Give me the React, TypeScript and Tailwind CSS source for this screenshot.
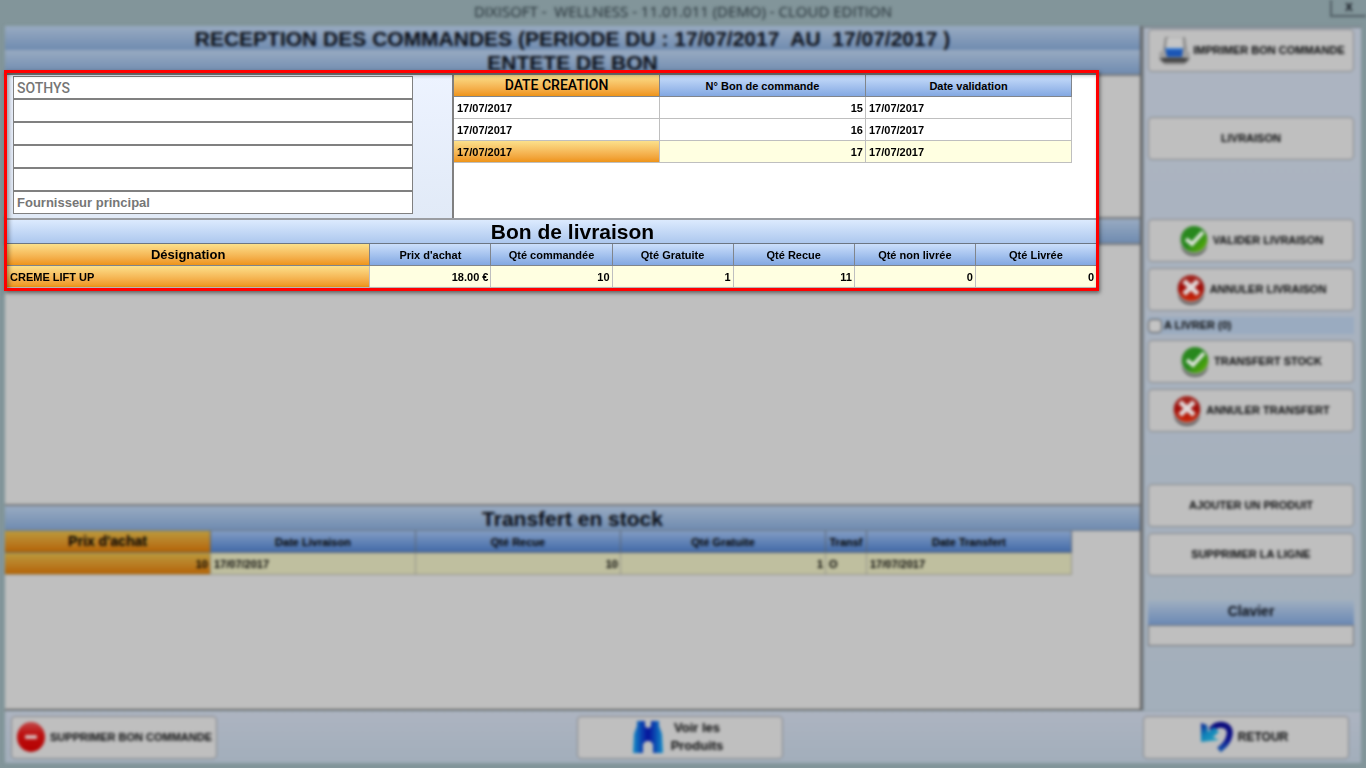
import type { ReactNode } from "react";

type Align = "left" | "right";

interface Column {
  label: string;
  width: string;
  align: Align;
}

const orderColumns: Column[] = [
  { label: "DATE CREATION", width: "w-[206px]", align: "left" },
  { label: "N° Bon de commande", width: "w-[206px]", align: "right" },
  { label: "Date validation", width: "w-[206px]", align: "left" },
];

const orders = [
  ["17/07/2017", "15", "17/07/2017"],
  ["17/07/2017", "16", "17/07/2017"],
  ["17/07/2017", "17", "17/07/2017"],
];

const deliveryColumns: Column[] = [
  { label: "Désignation", width: "w-1/3", align: "left" },
  { label: "Prix d'achat", width: "w-1/9", align: "right" },
  { label: "Qté commandée", width: "w-1/9", align: "right" },
  { label: "Qté Gratuite", width: "w-1/9", align: "right" },
  { label: "Qté Recue", width: "w-1/9", align: "right" },
  { label: "Qté non livrée", width: "w-1/9", align: "right" },
  { label: "Qté Livrée", width: "w-1/9", align: "right" },
];

const deliveries = [["CREME LIFT UP", "18.00 €", "10", "1", "11", "0", "0"]];

const transferColumns: Column[] = [
  { label: "Prix d'achat", width: "w-[206px]", align: "right" },
  { label: "Date Livraison", width: "w-[205px]", align: "left" },
  { label: "Qté Recue", width: "w-[205px]", align: "right" },
  { label: "Qté Gratuite", width: "w-[205px]", align: "right" },
  { label: "Transf", width: "w-[41px]", align: "left" },
  { label: "Date Transfert", width: "w-[205px]", align: "left" },
];

const transfers = [["10", "17/07/2017", "10", "1", "O", "17/07/2017"]];

const supplierFields = [
  { label: "Nom", value: "SOTHYS" },
  { label: "Adresse", value: "" },
  { label: "Complément", value: "" },
  { label: "Code postal", value: "" },
  { label: "Ville", value: "" },
  { label: "Type", value: "Fournisseur principal" },
];

interface GridProps {
  columns: Column[];
  rows: string[][];
  className: string;
  headSize: string;
  dimmed?: boolean;
}

function Grid({ columns, rows, className, headSize, dimmed = false }: GridProps) {
  const gold = dimmed
    ? "bg-linear-to-b from-[#bb9a3c] to-[#b46300]"
    : "bg-linear-to-b from-[#fbe08a] to-[#ee9415]";
  const blue = dimmed
    ? "bg-linear-to-b from-[#839dc4] to-[#426aa8]"
    : "bg-linear-to-b from-[#cbdffb] to-[#83a8e2]";
  const headLine = dimmed ? "border-[#5c6570]" : "border-[#80858c]";
  const cellLine = dimmed ? "border-[#94948a]" : "border-[#bfbfbf]";
  const selected = dimmed ? "bg-[#bfbf9f]" : "bg-[#ffffe1]";

  return (
    <table className={`table-fixed border-separate border-spacing-0 text-[11px] font-bold ${className}`}>
      <thead>
        <tr>
          {columns.map((c, i) => (
            <th
              key={c.label}
              className={`h-[22px] overflow-hidden border-r border-b p-0 text-center whitespace-nowrap ${headLine} ${c.width} ${i === 0 ? `leading-[21px] ${gold} ${headSize}` : `leading-[20px] ${blue}`}`}
            >
              {c.label}
            </th>
          ))}
        </tr>
      </thead>
      <tbody>
        {rows.map((row, r) => (
          <tr key={r}>
            {row.map((cell, i) => {
              const last = r === rows.length - 1;
              const fill = last ? (i === 0 ? gold : selected) : "bg-white";
              return (
                <td
                  key={i}
                  className={`h-[22px] border-r border-b py-0 leading-[20px] whitespace-nowrap ${cellLine} ${fill} ${columns[i].align === "right" ? "pr-[2px] text-right" : "pl-[3px] text-left"}`}
                >
                  {cell}
                </td>
              );
            })}
          </tr>
        ))}
      </tbody>
    </table>
  );
}

function CheckIcon() {
  return (
    <svg width="30" height="32" viewBox="0 0 30 32" aria-hidden="true">
      <defs>
        <linearGradient id="green" x1="0" y1="0" x2="1" y2="1">
          <stop offset="0" stopColor="#2f8a22" />
          <stop offset="0.5" stopColor="#24871a" />
          <stop offset="1" stopColor="#66b800" />
        </linearGradient>
      </defs>
      <ellipse cx="15" cy="20" rx="13" ry="11" fill="#5c605c" />
      <circle cx="15" cy="15" r="14" fill="#939e90" />
      <circle cx="15" cy="14" r="13" fill="url(#green)" />
      <path d="M7 14l6 5L24 7" fill="none" stroke="#dde4da" strokeWidth="4" />
    </svg>
  );
}

function CrossIcon() {
  return (
    <svg width="30" height="32" viewBox="0 0 30 32" aria-hidden="true">
      <defs>
        <linearGradient id="red" x1="0" y1="0" x2="0" y2="1">
          <stop offset="0" stopColor="#a32a22" />
          <stop offset="0.5" stopColor="#a00c08" />
          <stop offset="1" stopColor="#d02a08" />
        </linearGradient>
      </defs>
      <ellipse cx="15" cy="20" rx="13" ry="11" fill="#5c5858" />
      <circle cx="15" cy="15" r="14" fill="#9e9090" />
      <circle cx="15" cy="14" r="13" fill="url(#red)" />
      <path d="M8 7l14 13M22 7L8 20" fill="none" stroke="#e0d8d8" strokeWidth="5" />
    </svg>
  );
}

function PrinterIcon() {
  return (
    <svg width="34" height="32" viewBox="0 0 34 32" aria-hidden="true">
      <path d="M8 2h20l2 14H6z" fill="#b2b2b2" />
      <path d="M8 2h4l-3 14H6zM26 2h2l2 14h-3z" fill="#8a8a8a" />
      <path d="M10 3h15l1 10H9z" fill="#c6c6c6" />
      <path d="M2 18l6-4h19l6 4-1 8-5 4H8l-5-4z" fill="#a0a0a0" />
      <path d="M8 13h18l-1 9H10z" fill="#1a55b4" />
      <path d="M9 13h16v2H9z" fill="#3b7fd4" />
      <path d="M2 23h31l-5 5H7z" fill="#555" />
      <path d="M7 23h21l2 2H5z" fill="#303030" />
    </svg>
  );
}

function MinusIcon() {
  return (
    <svg width="30" height="32" viewBox="0 0 30 32" aria-hidden="true">
      <defs>
        <linearGradient id="stop" x1="0" y1="0" x2="0" y2="1">
          <stop offset="0" stopColor="#c24a4a" />
          <stop offset="0.4" stopColor="#bd1010" />
          <stop offset="1" stopColor="#b40000" />
        </linearGradient>
      </defs>
      <ellipse cx="15" cy="16" rx="14" ry="15" fill="url(#stop)" />
      <rect x="9" y="14" width="12" height="4" rx="1" fill="#d6baba" />
    </svg>
  );
}

function BinocularsIcon() {
  return (
    <svg width="30" height="34" viewBox="0 0 30 34" aria-hidden="true">
      <defs>
        <linearGradient id="lens" x1="0" y1="0" x2="1" y2="0">
          <stop offset="0" stopColor="#128ec8" />
          <stop offset="0.3" stopColor="#0a3fae" />
          <stop offset="0.5" stopColor="#06129a" />
          <stop offset="0.7" stopColor="#0a3fae" />
          <stop offset="1" stopColor="#128ec8" />
        </linearGradient>
      </defs>
      <path
        d="M4 1h8v5l2 2h2l2-2V1h8v5l3 8 1 19h-10V24l-3-3h-4l-3 3v9H0l1-19 3-8z"
        fill="url(#lens)"
      />
    </svg>
  );
}

function ReturnIcon() {
  return (
    <svg width="34" height="32" viewBox="0 0 34 32" aria-hidden="true">
      <defs>
        <linearGradient id="arrow" x1="0" y1="0" x2="0.7" y2="1">
          <stop offset="0" stopColor="#0a1a90" />
          <stop offset="0.5" stopColor="#1080b8" />
          <stop offset="1" stopColor="#20a0c0" />
        </linearGradient>
        <linearGradient id="tail" x1="0" y1="0" x2="0" y2="1">
          <stop offset="0" stopColor="#08087c" />
          <stop offset="0.6" stopColor="#0c128c" />
          <stop offset="1" stopColor="#1250a8" />
        </linearGradient>
      </defs>
      <path
        d="M11 9c4-5 8-6 12-5 6 1 8 6 6 12-1 5-5 9-10 13"
        fill="none"
        stroke="url(#tail)"
        strokeWidth="6"
      />
      <path d="M1 2l6 2 1 7 6-5 5 5-6 5 6 3-18 2z" fill="url(#arrow)" />
    </svg>
  );
}

interface ActionProps {
  children: ReactNode;
  icon?: ReactNode;
  className?: string;
}

function Action({ children, icon, className = "w-full text-[11px] gap-2" }: ActionProps) {
  return (
    <button
      type="button"
      className={`flex h-[43px] shrink-0 items-center justify-center rounded-sm border border-[#85878b] bg-[#bfbfbf] font-bold whitespace-nowrap text-[#060708] ${className}`}
    >
      {icon}
      <span>{children}</span>
    </button>
  );
}

function Band({ children }: { children: ReactNode }) {
  return (
    <h2 className="h-6 shrink-0 overflow-hidden bg-linear-to-b from-[#99abc2] to-[#6f8bb0] text-center text-[21px] leading-[26px] font-bold whitespace-pre text-[#080c14]">
      {children}
    </h2>
  );
}

function Sidebar() {
  return (
    <aside className="flex w-[219px] shrink-0 flex-col border-t-2 border-l-2 border-[#7d868e] bg-linear-to-b from-[#adb5c2] to-[#a3afbb] pt-px pr-[7px] pl-1">
      <Action icon={<PrinterIcon />} className="w-full gap-0.5 text-[11px]">
        IMPRIMER BON COMMANDE
      </Action>
      <div className="mt-[45px]">
        <Action>LIVRAISON</Action>
      </div>
      <div className="mt-[59px] flex flex-col gap-1.5">
        <Action icon={<CheckIcon />} className="w-full gap-1 text-[11px]">VALIDER LIVRAISON</Action>
        <Action icon={<CrossIcon />} className="w-full gap-1 text-[11px]">ANNULER LIVRAISON</Action>
        <label className="flex h-[17px] items-center gap-0.5 bg-[#9aabc0] text-[11px] font-bold text-[#060708]">
          <input
            type="checkbox"
            className="size-[14px] appearance-none rounded-sm border border-[#555] bg-[#c4c4c4]"
          />
          A LIVRER (0)
        </label>
        <Action icon={<CheckIcon />} className="w-full gap-1 text-[11px]">TRANSFERT STOCK</Action>
        <Action icon={<CrossIcon />} className="w-full gap-1 text-[11px]">ANNULER TRANSFERT</Action>
      </div>
      <div className="mt-[52px] flex flex-col gap-1.5">
        <Action>AJOUTER UN PRODUIT</Action>
        <Action>SUPPRIMER LA LIGNE</Action>
      </div>
      <label
        htmlFor="clavier"
        className="mt-6 h-[25px] bg-linear-to-b from-[#a0afc0] to-[#6a88b4] text-center text-[14px] leading-[22px] font-bold text-[#080c14]"
      >
        Clavier
      </label>
      <input
        id="clavier"
        type="text"
        className="h-[21px] w-full border border-[#707274] bg-[#bfbfbf] px-1 text-[11px]"
      />
    </aside>
  );
}

/* Out-of-focus application window: the blur on each part adds to the one on the frame. */
function Screen() {
  return (
    <div className="flex min-h-screen flex-col px-[5px] pb-[5px] blur-[1px]">
      <header className="relative h-[26px] shrink-0 text-center blur-[1px]">
        <h1 className="font-['Open_Sans',sans-serif] text-[15px] leading-[22px] whitespace-pre text-[#1e2a30]">
          {"DIXISOFT -  WELLNESS - 11.01.011 (DEMO) - CLOUD EDITION"}
        </h1>
        <button
          type="button"
          aria-label="Fermer"
          className="absolute top-0 -right-[5px] h-[17px] w-9 border-b-2 border-l-2 border-[#4f5d63] text-[11px] leading-[11px] font-bold text-[#080c14]"
        >
          X
        </button>
      </header>

      <main className="flex flex-1 blur-[1px]">
        <div className="flex min-w-0 flex-1 flex-col border-r-2 border-b-2 border-[#606060]">
          <Band>{"RECEPTION DES COMMANDES (PERIODE DU : 17/07/2017  AU  17/07/2017 )"}</Band>
          <Band>ENTETE DE BON</Band>
          <div className="h-[145px] shrink-0 border-y-2 border-[#77797c] bg-[#bfbfbf]" />
          <Band>Bon de livraison</Band>
          <div className="flex-1 border-y-2 border-[#77797c] bg-[#bfbfbf]" />
          <Band>Transfert en stock</Band>
          <div className="h-[179px] shrink-0 border-t border-[#6c7683] bg-[#bfbfbf]">
            <Grid columns={transferColumns} rows={transfers} className="w-[1067px]" headSize="text-[14px]" dimmed />
          </div>
        </div>
        <Sidebar />
      </main>

      <footer className="flex h-[52px] shrink-0 items-center justify-between bg-linear-to-b from-[#adb4c1] to-[#a2aebb] pr-3 pl-[6px] blur-[1px]">
        <Action icon={<MinusIcon />} className="w-[206px] gap-1 text-[11px]">
          SUPPRIMER BON COMMANDE
        </Action>
        <Action icon={<BinocularsIcon />} className="w-[206px] gap-2 pr-1 text-[13px] leading-[18px]">
          Voir les
          <br />
          Produits
        </Action>
        <Action icon={<ReturnIcon />} className="w-[206px] gap-1 pr-1 text-[12px]">
          RETOUR
        </Action>
      </footer>
    </div>
  );
}

function OrderPanel() {
  return (
    <section className="absolute top-[70px] right-[267px] left-1 border-[3px] border-[#ff0000] bg-white shadow-[1px_2px_4px_#00000080]">
      <div className="flex h-[147px] border-y-2 border-t-[#808080] border-b-[#9a9da2]">
        <form className="flex w-[447px] shrink-0 flex-col border-r-2 border-[#808080] bg-linear-to-b from-[#edf3ff] to-[#e1eaf7] pt-px pl-[6px]">
          {supplierFields.map((f) => (
            <input
              key={f.label}
              type="text"
              aria-label={f.label}
              defaultValue={f.value}
              className={`h-[23px] w-[400px] border border-[#808080] bg-white px-[3px] text-[#767676] inset-ring inset-ring-white ${f.label === "Type" ? "text-[13px] font-bold" : "font-[Roboto,sans-serif] text-[14px] font-medium"}`}
            />
          ))}
        </form>
        <div className="flex-1 bg-white">
          <Grid
            columns={orderColumns}
            rows={orders}
            className="w-[618px]"
            headSize="font-[Roboto,sans-serif] text-[14px] font-medium"
          />
        </div>
      </div>
      <h2 className="h-6 border-b border-[#6c7683] bg-linear-to-b from-[#dceafe] to-[#adc8ee] pl-[42px] text-center text-[21px] leading-6 font-bold">
        Bon de livraison
      </h2>
      <div className="overflow-hidden">
        <Grid
          columns={deliveryColumns}
          rows={deliveries}
          className="w-[calc(100%+1px)]"
          headSize="text-[13px]"
        />
      </div>
      <div className="pointer-events-none absolute inset-0 shadow-[inset_2px_2px_4px_#00000060]" />
    </section>
  );
}

export default function App() {
  return (
    <div className="relative min-h-screen overflow-hidden bg-[#82959a] font-['Liberation_Sans',Arial,sans-serif] text-black">
      <Screen />
      <OrderPanel />
    </div>
  );
}
